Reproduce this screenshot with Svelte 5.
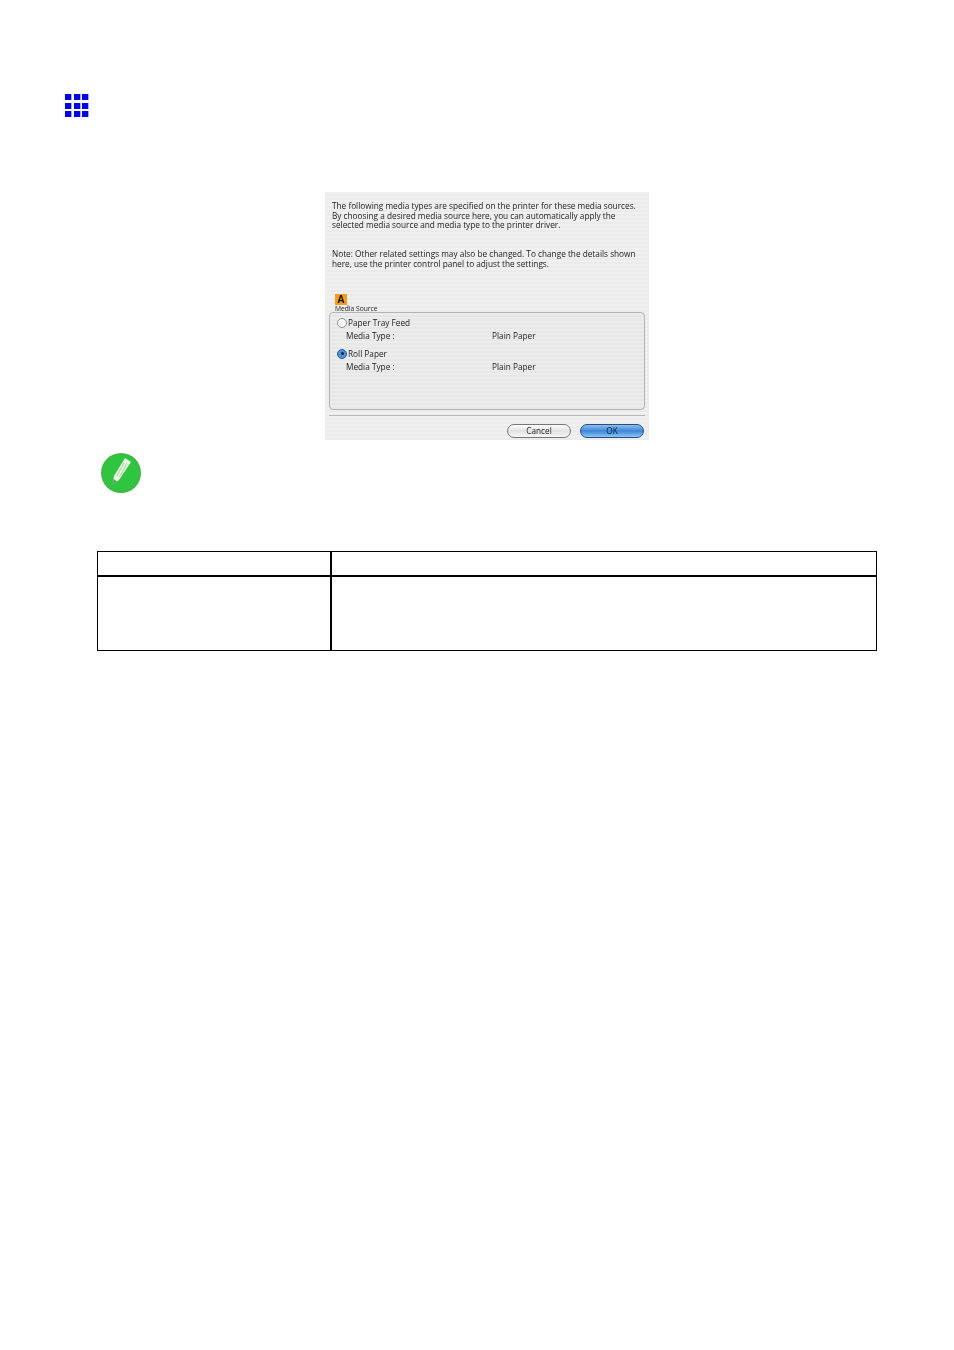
<script>
  const sources = [
    { name: 'Paper Tray Feed', type: 'Plain Paper', checked: false },
    { name: 'Roll Paper', type: 'Plain Paper', checked: true }
  ];
</script>

<style>
  :global(body) {
    margin: 0;
    background: #fff;
  }

  .page {
    width: 954px;
    height: 1350px;
    box-sizing: border-box;
    padding-top: 94px;
    font-family: "Open Sans", "DejaVu Sans", sans-serif;
  }

  .grid-icon {
    display: grid;
    grid-template-columns: repeat(3, 6px);
    grid-auto-rows: 6px;
    gap: 2.5px;
    width: 23px;
    height: 23px;
    margin-left: 65px;
  }

  .grid-icon span {
    background: #0000f4;
    box-shadow: 1px 0 0 #a9a9ff;
  }

  .dialog {
    width: 324px;
    height: 248px;
    box-sizing: border-box;
    margin: 75px 0 0 325px;
    padding: 9px 4px 0 4px;
    background: repeating-linear-gradient(#f0f0f0 0 2px, #ebebeb 2px 4px);
    color: #222;
    font-size: 8.25px;
    line-height: 9.7px;
    filter: blur(0.3px);
  }

  .dialog p {
    margin: 0 0 0 3px;
    white-space: nowrap;
  }

  .dialog p + p {
    margin-top: 19px;
  }

  .source-icon {
    width: 12px;
    height: 11px;
    margin: 25px 0 0 6px;
    background: #f5a010;
    color: #111;
    font-size: 10px;
    font-weight: 700;
    line-height: 11px;
    text-align: center;
  }

  .source-label {
    margin-left: 6px;
    font-size: 6.7px;
    line-height: 7px;
    height: 7px;
  }

  .group {
    height: 98px;
    box-sizing: border-box;
    padding: 4px 7px 0 7px;
    border: 1px solid #b4b4b4;
    border-radius: 4px;
    background: repeating-linear-gradient(#ececec 0 2px, #e7e7e7 2px 4px);
  }

  .source {
    height: 31px;
  }

  .radio-row {
    display: flex;
    align-items: center;
    gap: 1px;
    height: 12px;
  }

  .radio {
    display: flex;
    align-items: center;
    justify-content: center;
    width: 10px;
    height: 10px;
    box-sizing: border-box;
    border: 1px solid #8e8e8e;
    border-radius: 50%;
    background: #f7f7f7;
  }

  .radio.checked {
    border-color: #1f5fa8;
    background: #4d92dc;
  }

  .radio.checked::after {
    content: '';
    width: 3px;
    height: 3px;
    border-radius: 50%;
    background: #10202f;
  }

  .type-row {
    display: grid;
    grid-template-columns: 146px 1fr;
    margin: 2px 0 0 9px;
  }

  .rule {
    height: 1px;
    margin-top: 5px;
    background: #b9b9b9;
  }

  .buttons {
    display: flex;
    justify-content: flex-end;
    gap: 9px;
    margin-top: 8px;
    padding-right: 1px;
  }

  .btn {
    width: 64px;
    height: 14px;
    box-sizing: border-box;
    border: 1px solid #777;
    border-radius: 7px;
    background: linear-gradient(#fdfdfd, #e2e2e2 50%, #f7f7f7);
    font-size: 8.25px;
    line-height: 12px;
    text-align: center;
    color: #222;
  }

  .btn.primary {
    border-color: #27507f;
    background: linear-gradient(#8fc0ee, #3c86d8 50%, #8cc6f5);
    color: #10202f;
  }

  .note-icon {
    display: block;
    margin: 12px 0 0 100px;
    filter: blur(0.6px);
  }

  .table {
    display: grid;
    grid-template-columns: 234px 1fr;
    grid-template-rows: 25px 1fr;
    width: 780px;
    height: 100px;
    box-sizing: border-box;
    margin: 57px 0 0 97px;
    border: 1px solid #000;
  }

  .cell:nth-child(odd) {
    border-right: 2px solid #000;
  }

  .cell:nth-child(-n + 2) {
    border-bottom: 2px solid #000;
  }
</style>

<div class="page">
  <div class="grid-icon">
    {#each Array(9) as _}
      <span></span>
    {/each}
  </div>

  <div class="dialog">
    <p>The following media types are specified on the printer for these media sources.<br />By choosing a desired media source here, you can automatically apply the<br />selected media source and media type to the printer driver.</p>
    <p>Note: Other related settings may also be changed. To change the details shown<br />here, use the printer control panel to adjust the settings.</p>

    <div class="source-icon">A</div>
    <div class="source-label">Media Source</div>

    <div class="group">
      {#each sources as source}
        <div class="source">
          <div class="radio-row">
            <span class="radio" class:checked={source.checked}></span>
            <span>{source.name}</span>
          </div>
          <div class="type-row">
            <span>Media Type :</span>
            <span>{source.type}</span>
          </div>
        </div>
      {/each}
    </div>

    <div class="rule"></div>

    <div class="buttons">
      <div class="btn">Cancel</div>
      <div class="btn primary">OK</div>
    </div>
  </div>

  <svg class="note-icon" width="42" height="42" viewBox="0 0 42 42">
    <circle cx="21" cy="21" r="20" fill="#3dbb45" />
    <circle cx="21" cy="21" r="17.5" fill="#2ec63e" />
    <path d="M25 6 L31 10 L19 28 L13 32 L14 24 Z" fill="#eef6e8" />
    <path d="M24 11 L17 24 M27 11 L19.5 25" stroke="#a9dca0" stroke-width="1.2" fill="none" />
    <path d="M13 32 L13.6 27 L17 29.5 Z" fill="#6b8a60" />
  </svg>

  <div class="table">
    <div class="cell"></div>
    <div class="cell"></div>
    <div class="cell"></div>
    <div class="cell"></div>
  </div>
</div>
